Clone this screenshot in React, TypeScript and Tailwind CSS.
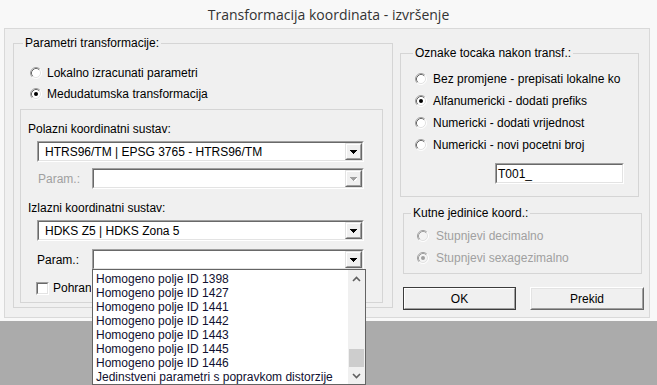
import React from "react";

const FONT = "font-['Liberation_Sans',Arial,sans-serif]";

function Radio({ checked = false, disabled = false }: { checked?: boolean; disabled?: boolean }) {
  return (
    <svg width="12" height="12" viewBox="0 0 12 12" className="shrink-0">
      <circle cx="6" cy="6" r="5" fill={disabled ? "#f4f4f4" : "#ffffff"} />
      <path d="M2.11 9.89A5.5 5.5 0 0 1 9.89 2.11" stroke="#a0a0a0" fill="none" />
      <path d="M9.89 2.11A5.5 5.5 0 0 1 2.11 9.89" stroke="#ffffff" fill="none" />
      <path d="M2.82 9.18A4.5 4.5 0 0 1 9.18 2.82" stroke={disabled ? "#a0a0a0" : "#696969"} fill="none" />
      <path d="M9.18 2.82A4.5 4.5 0 0 1 2.82 9.18" stroke="#e3e3e3" fill="none" />
      {checked && <circle cx="6" cy="6" r="2" fill={disabled ? "#a0a0a0" : "#000000"} />}
    </svg>
  );
}

function Sunken({
  className = "",
  innerClassName = "",
  children,
}: {
  className?: string;
  innerClassName?: string;
  children?: React.ReactNode;
}) {
  return (
    <div className={`border border-t-[#a0a0a0] border-l-[#a0a0a0] border-r-white border-b-white ${className}`}>
      <div className={`h-full border border-t-[#696969] border-l-[#696969] border-r-[#e3e3e3] border-b-[#e3e3e3] ${innerClassName}`}>
        {children}
      </div>
    </div>
  );
}

function Arrow({ disabled = false }: { disabled?: boolean }) {
  return (
    <div className="w-[17px] h-[17px] shrink-0 border border-t-[#e3e3e3] border-l-[#e3e3e3] border-r-[#696969] border-b-[#696969]">
      <div className="h-full border border-t-white border-l-white border-r-[#a0a0a0] border-b-[#a0a0a0] bg-[#f0f0f0] flex items-center justify-center">
        <svg width="7" height="4" viewBox="0 0 7 4" shapeRendering="crispEdges">
          {disabled && <polygon points="1,1 8,1 4.5,5" fill="#ffffff" />}
          <polygon points="0,0 7,0 3.5,4" fill={disabled ? "#a0a0a0" : "#000000"} />
        </svg>
      </div>
    </div>
  );
}

function Combo({ text = "", disabled = false, className = "" }: { text?: string; disabled?: boolean; className?: string }) {
  return (
    <Sunken className={`h-[21px] ${className}`} innerClassName="bg-white flex items-center">
      <span className="flex-1 pl-[6px] whitespace-nowrap overflow-hidden">{text}</span>
      <Arrow disabled={disabled} />
    </Sunken>
  );
}

function Chevron({ up }: { up: boolean }) {
  return (
    <svg width="9" height="6" viewBox="0 0 9 6">
      <polyline
        points={up ? "1,5 4.5,1.5 8,5" : "1,1 4.5,4.5 8,1"}
        fill="none"
        stroke="#606060"
        strokeWidth="1.6"
      />
    </svg>
  );
}

const items = [
  "Homogeno polje ID 1398",
  "Homogeno polje ID 1427",
  "Homogeno polje ID 1441",
  "Homogeno polje ID 1442",
  "Homogeno polje ID 1443",
  "Homogeno polje ID 1445",
  "Homogeno polje ID 1446",
  "Jedinstveni parametri s popravkom distorzije",
];

export default function App() {
  return (
    <div className={`w-[657px] h-[385px] bg-[#ababab] relative overflow-hidden ${FONT} text-[12px] leading-[14px] text-black`}>
      <div className="h-[321px] bg-[#f8f8f8] flex flex-col">
        <div className="h-[28px] flex items-center justify-center font-['Open_Sans',sans-serif] text-[14px] text-[#333333] pt-[1px]">
          Transformacija koordinata - izvršenje
        </div>
        <div className="ml-[4px] w-[646px] h-[290px] border border-[#d9d9d9] bg-[#f0f0f0] flex items-start">
          {/* Left group */}
          <div className="ml-[8px] mt-[14px] w-[380px] h-[265px] shrink-0 border border-[#d5d5d5] relative flex flex-col">
            <span className="absolute -top-[8px] left-[9px] px-[2px] bg-[#f0f0f0]">Parametri transformacije:</span>
            <div className="pl-[16px] pt-[18px] flex flex-col">
              <div className="h-[21px] flex items-center gap-[5px]">
                <Radio />
                <span>Lokalno izracunati parametri</span>
              </div>
              <div className="h-[21px] flex items-center gap-[5px]">
                <Radio checked />
                <span>Medudatumska transformacija</span>
              </div>
            </div>
            <div className="ml-[6px] mt-[5px] w-[363px] h-[194px] border border-[#d5d5d5] flex flex-col">
              <div className="pl-[7px] pt-[12px]">Polazni koordinatni sustav:</div>
              <Combo className="ml-[16px] mt-[5px] w-[327px]" text="HTRS96/TM | EPSG 3765 - HTRS96/TM" />
              <div className="mt-[6px] pl-[17px] flex items-center">
                <span className="w-[54px] text-[#a0a0a0]">Param.:</span>
                <Combo className="w-[272px]" disabled />
              </div>
              <div className="pl-[7px] mt-[12px]">Izlazni koordinatni sustav:</div>
              <Combo className="ml-[16px] mt-[5px] w-[327px]" text="HDKS Z5 | HDKS Zona 5" />
              <div className="mt-[8px] pl-[16px] flex items-center">
                <span className="w-[55px]">Param.:</span>
                <Combo className="w-[272px]" />
              </div>
              <div className="mt-[11px] pl-[15px] flex items-center gap-[4px]">
                <Sunken className="w-[13px] h-[13px]" innerClassName="bg-white" />
                <span className="w-[38px] overflow-hidden whitespace-nowrap">Pohran</span>
              </div>
            </div>
          </div>

          {/* Right column */}
          <div className="ml-[7px] flex flex-col">
            <div className="mt-[24px] w-[239px] h-[144px] border border-[#d5d5d5] relative">
              <span className="absolute -top-[8px] left-[12px] px-[2px] bg-[#f0f0f0]">Oznake tocaka nakon transf.:</span>
              <div className="pt-[14px] pl-[14px] flex flex-col">
                <div className="h-[22px] flex items-center gap-[6px]">
                  <Radio />
                  <span className="whitespace-nowrap">Bez promjene - prepisati lokalne ko</span>
                </div>
                <div className="h-[22px] flex items-center gap-[6px]">
                  <Radio checked />
                  <span>Alfanumericki - dodati prefiks</span>
                </div>
                <div className="h-[22px] flex items-center gap-[6px]">
                  <Radio />
                  <span>Numericki - dodati vrijednost</span>
                </div>
                <div className="h-[22px] flex items-center gap-[6px]">
                  <Radio />
                  <span>Numericki - novi pocetni broj</span>
                </div>
                <Sunken className="ml-[80px] mt-[7px] w-[129px] h-[21px]" innerClassName="bg-white flex items-center pl-[1px]">
                  <span>T001_</span>
                </Sunken>
              </div>
            </div>

            <div className="ml-[3px] mt-[16px] w-[239px] h-[61px] border border-[#d5d5d5] relative">
              <span className="absolute -top-[8px] left-[7px] px-[2px] bg-[#f0f0f0]">Kutne jedinice koord.:</span>
              <div className="pt-[11px] pl-[13px] flex flex-col text-[#a0a0a0]">
                <div className="h-[22px] flex items-center gap-[7px]">
                  <Radio disabled />
                  <span>Stupnjevi decimalno</span>
                </div>
                <div className="h-[22px] flex items-center gap-[7px]">
                  <Radio checked disabled />
                  <span>Stupnjevi sexagezimalno</span>
                </div>
              </div>
            </div>

            <div className="ml-[3px] mt-[13px] flex gap-[14px]">
              <div className="w-[113px] h-[23px] border border-[#3c3c3c]">
                <div className="h-full border border-t-white border-l-white border-r-[#a0a0a0] border-b-[#a0a0a0] bg-[#f0f0f0] flex items-center justify-center">
                  OK
                </div>
              </div>
              <div className="w-[114px] h-[23px] border border-t-white border-l-white border-r-[#696969] border-b-[#696969]">
                <div className="h-full border border-t-[#e3e3e3] border-l-[#e3e3e3] border-r-[#a0a0a0] border-b-[#a0a0a0] bg-[#f0f0f0] flex items-center justify-center">
                  Prekid
                </div>
              </div>
            </div>
          </div>
        </div>
      </div>

      {/* Open dropdown list */}
      <div className="absolute left-[92px] top-[269px] w-[274px] h-[116px] border border-[#646464] bg-white flex">
        <div className="flex-1 pt-[2px] pl-[3px] flex flex-col text-[#101030]">
          {items.map((t) => (
            <div key={t} className="h-[14px] leading-[14px] whitespace-nowrap">
              {t}
            </div>
          ))}
        </div>
        <div className="w-[17px] bg-[#f0f0f0] flex flex-col">
          <div className="h-[17px] flex items-center justify-center">
            <Chevron up />
          </div>
          <div className="flex-1 flex flex-col justify-end">
            <div className="h-[18px] mx-[1px] bg-[#cdcdcd]" />
          </div>
          <div className="h-[17px] flex items-center justify-center">
            <Chevron up={false} />
          </div>
        </div>
      </div>
    </div>
  );
}
